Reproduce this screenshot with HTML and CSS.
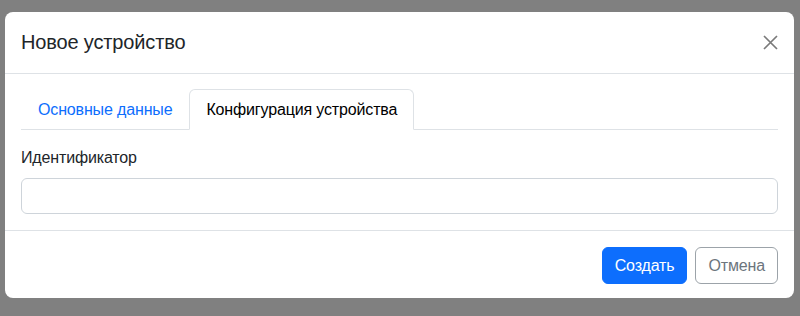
FILE: index.html
```html
<!DOCTYPE html>
<html lang="ru">
<head>
    <meta charset="UTF-8">
    <meta name="viewport" content="width=device-width, initial-scale=1.0">
    <title>Новое устройство</title>
    <link rel="stylesheet" href="styles.css">
</head>
<body>
    <div class="modal">
        <div class="modal-header">
            <h5 class="modal-title">Новое устройство</h5>
            <button type="button" class="btn-close" aria-label="Закрыть">
                <svg width="15" height="15" viewBox="0 0 15 15">
                    <path d="M1 1L14 14M14 1L1 14" stroke="#7a7a7a" stroke-width="1.7" fill="none"/>
                </svg>
            </button>
        </div>

        <div class="modal-body">
            <ul class="nav-tabs">
                <li><a href="#" class="tab">Основные данные</a></li>
                <li><a href="#" class="tab active">Конфигурация устройства</a></li>
            </ul>

            <div class="tab-content">
                <label class="form-label" for="deviceId">Идентификатор</label>
                <input type="text" id="deviceId" class="form-control">
            </div>
        </div>

        <div class="modal-footer">
            <button type="button" class="btn btn-primary">Создать</button>
            <button type="button" class="btn btn-outline">Отмена</button>
        </div>
    </div>
</body>
</html>
```

FILE: styles.css
```css
body {
    font-family: "Liberation Sans", Arial, sans-serif;
    font-size: 16px;
    letter-spacing: -0.15px;
    color: #212529;
    background-color: #808080;
    margin: 0;
    padding: 12px 6px 0 5px;
}

.modal {
    background: white;
    border-radius: 8px;
    overflow: hidden;
}

.modal-header {
    display: flex;
    align-items: center;
    justify-content: space-between;
    padding: 15px 16px 16px 16px;
    border-bottom: 1px solid #dee2e6;
}

.modal-title {
    margin: 0;
    font-size: 20px;
    font-weight: normal;
    line-height: 30px;
}

.btn-close {
    display: flex;
    padding: 0;
    border: none;
    background: none;
    cursor: pointer;
}

.modal-body {
    padding: 15px 16px 16px 16px;
}

.nav-tabs {
    display: flex;
    list-style: none;
    margin: 0;
    padding: 0;
    border-bottom: 1px solid #dee2e6;
}

.tab {
    display: block;
    padding: 8px 16px;
    line-height: 23px;
    color: #0d6efd;
    text-decoration: none;
    border: 1px solid transparent;
    border-radius: 6px 6px 0 0;
    margin-bottom: -1px;
}

.tab.active {
    color: #000;
    border-color: #dee2e6 #dee2e6 white;
}

.tab-content {
    padding-top: 16px;
}

.form-label {
    display: block;
    line-height: 24px;
    margin-bottom: 8px;
}

.form-control {
    display: block;
    width: 100%;
    box-sizing: border-box;
    height: 36px;
    padding: 6px 12px;
    font-size: 16px;
    font-family: inherit;
    border: 1px solid #ced4da;
    border-radius: 6px;
}

.modal-footer {
    display: flex;
    justify-content: flex-end;
    gap: 8px;
    padding: 16px 16px 14px 16px;
    border-top: 1px solid #dee2e6;
}

.btn {
    height: 37px;
    padding: 6px 12px;
    font-size: 16px;
    font-family: inherit;
    letter-spacing: -0.15px;
    border-radius: 6px;
    cursor: pointer;
}

.btn-primary {
    background-color: #0d6efd;
    border: 1px solid #0d6efd;
    color: white;
}

.btn-outline {
    background-color: white;
    border: 1px solid #9ca3a9;
    color: #6c757d;
}
```
